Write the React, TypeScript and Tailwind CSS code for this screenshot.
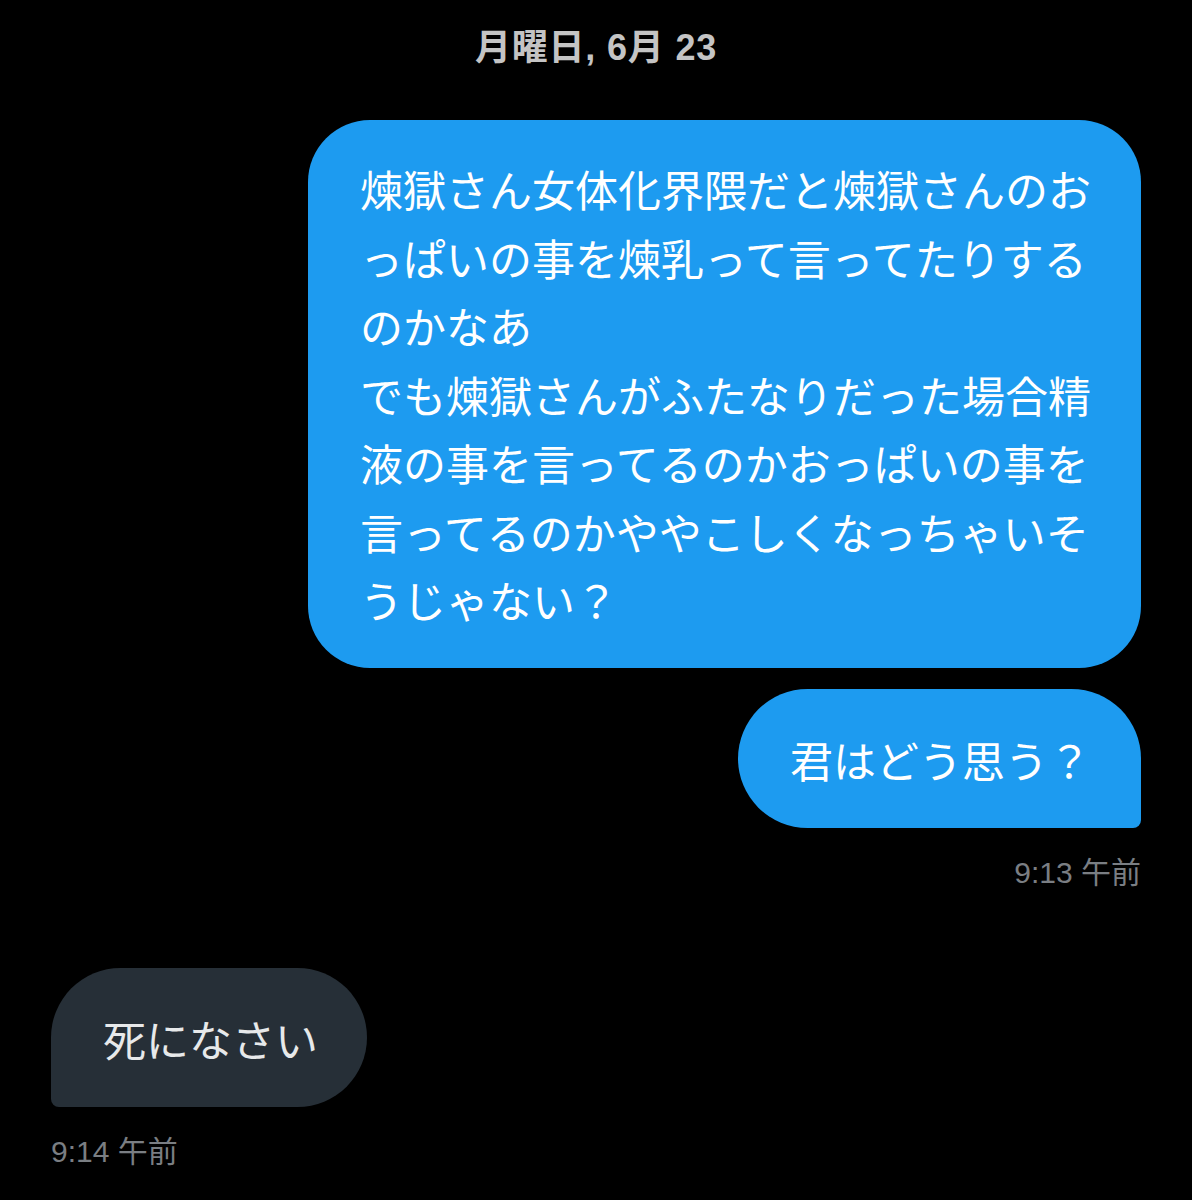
import React from 'react';

const font = { fontFamily: '"Liberation Sans", "Noto Sans CJK JP", sans-serif' };

const longLines = [
  '煉獄さん女体化界隈だと煉獄さんのお',
  'っぱいの事を煉乳って言ってたりする',
  'のかなあ',
  'でも煉獄さんがふたなりだった場合精',
  '液の事を言ってるのかおっぱいの事を',
  '言ってるのかややこしくなっちゃいそ',
  'うじゃない？',
];

export default function App() {
  return (
    <div
      className="w-[1192px] h-[1200px] overflow-hidden bg-black px-[51px] flex flex-col"
      style={font}
    >
      {/* date */}
      <div className="pt-[28px] text-center text-[36px] leading-[40px] font-bold text-[#c4c4c4] tracking-[0.8px]">
        月曜日, 6月 23
      </div>

      {/* sent */}
      <div className="mt-[52px] flex flex-col items-end">
        <div className="w-[833px] rounded-[62px] bg-[#1d9bf0] pl-[52px] pr-[40px] pt-[38px] pb-[30px] text-[43px] leading-[68.5px] text-white">
          {longLines.map((l) => (
            <div key={l} className="whitespace-nowrap">
              {l}
            </div>
          ))}
        </div>
        <div className="mt-[21px] h-[139px] flex items-center rounded-[70px] rounded-br-[8px] bg-[#1d9bf0] pl-[52px] pr-[50px] pt-[10px] text-[43px] leading-[68px] text-white whitespace-nowrap">
          君はどう思う？
        </div>
        <div className="mt-[26px] text-[30px] leading-[38px] text-[#7a7e83]">9:13 午前</div>
      </div>

      {/* received */}
      <div className="mt-[76px] flex flex-col items-start">
        <div className="h-[139px] flex items-center rounded-[70px] rounded-bl-[8px] bg-[#262f37] pl-[52px] pr-[49px] pt-[10px] text-[43px] leading-[68px] text-[#e7e9ea] whitespace-nowrap">
          死になさい
        </div>
        <div className="mt-[26px] text-[30px] leading-[38px] text-[#7a7e83]">9:14 午前</div>
      </div>
    </div>
  );
}
